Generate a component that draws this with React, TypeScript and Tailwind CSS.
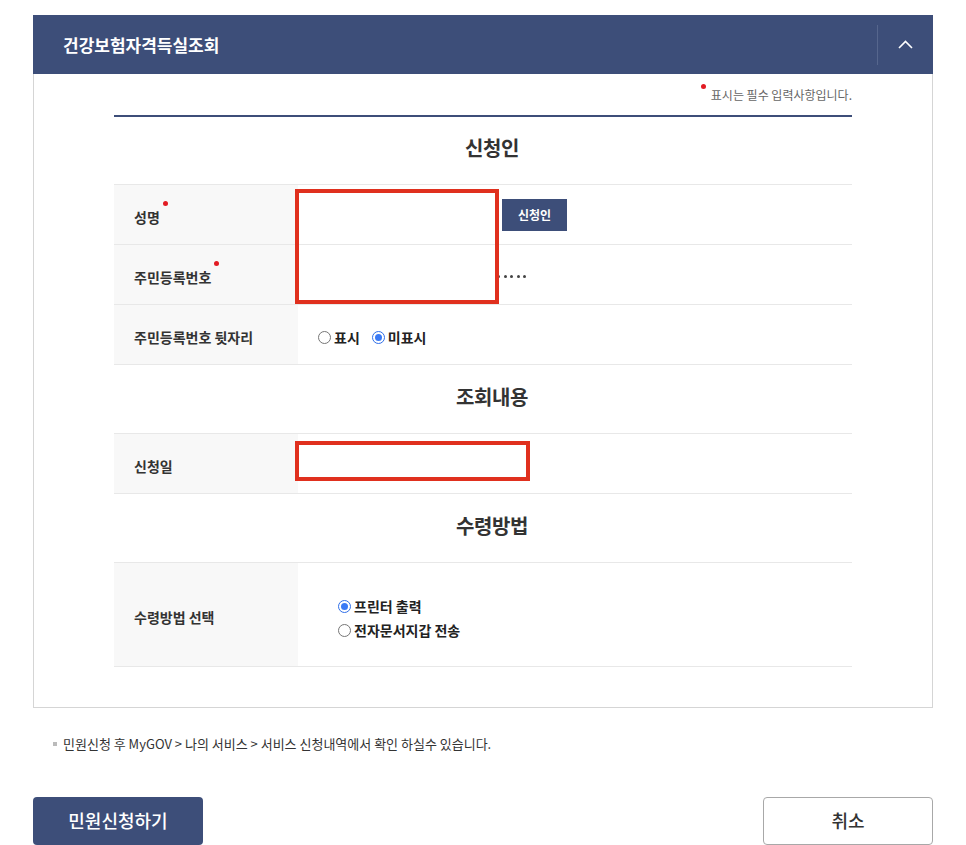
import React from "react";

const font = { fontFamily: '"Noto Sans CJK KR", "Noto Sans", sans-serif' };

function Radio({ checked, label }: { checked?: boolean; label: string }) {
  return (
    <label className="flex items-center gap-[3px] text-[14px] font-bold text-[#222]">
      {checked ? (
        <span className="w-[13px] h-[13px] rounded-full border border-[#2f6fe9] flex items-center justify-center bg-white">
          <span className="w-[7px] h-[7px] rounded-full bg-[#3a7af5]" />
        </span>
      ) : (
        <span className="w-[13px] h-[13px] rounded-full border border-[#767676] bg-white" />
      )}
      {label}
    </label>
  );
}

function Row({ label, required, children, tall }: { label: string; required?: boolean; children?: React.ReactNode; tall?: boolean }) {
  return (
    <div className={`flex border-b border-[#e8e8e8] ${tall ? "h-[104px]" : "h-[60px]"}`}>
      <div className="w-[184px] shrink-0 bg-[#f8f8f8] flex items-center pl-5 pt-[5px]">
        <span className="relative text-[14px] font-bold text-[#333]">
          {label}
          {required && <span className="absolute -right-[8px] top-[-6px] w-[5px] h-[5px] rounded-full bg-[#e21b23]" />}
        </span>
      </div>
      <div className="flex-1 relative flex items-center">{children}</div>
    </div>
  );
}

function SectionTitle({ title }: { title: string }) {
  return (
    <div className="h-[69px] flex items-center justify-center pl-[18px] pb-[5px] border-b border-[#e8e8e8]">
      <h3 className="text-[20px] font-bold text-[#333] tracking-[-0.02em]">{title}</h3>
    </div>
  );
}

export default function App() {
  return (
    <div className="bg-white w-[966px] min-h-[845px] pt-[15px] pl-[33px]" style={font}>
      <div className="w-[900px]">
        {/* Header */}
        <div className="h-[59px] bg-[#3d4e79] flex items-center justify-between">
          <h2 className="pl-[30px] text-[17px] font-bold text-white">건강보험자격득실조회</h2>
          <div className="flex items-center h-full">
            <div className="w-px h-[40px] bg-[#56668d]" />
            <button className="w-[55px] h-full flex items-center justify-center">
              <svg width="15" height="9" viewBox="0 0 15 9" fill="none">
                <polyline points="1,8 7.5,1.5 14,8" stroke="white" strokeWidth="1.6" />
              </svg>
            </button>
          </div>
        </div>

        {/* Body */}
        <div className="border-x border-b border-[#d5d5d5] px-[80px] pt-[12px] pb-[40px]">
          <div className="flex justify-end items-start h-[17px] mb-[12px]">
            <span className="w-[5px] h-[5px] rounded-full bg-[#e21b23] mt-[-2px] mr-[5px]" />
            <span className="text-[12px] text-[#666] leading-[17px]">표시는 필수 입력사항입니다.</span>
          </div>
          <div className="border-t-2 border-[#3d4e79]" />

          <div className="h-[68px] flex items-center justify-center pl-[18px] pb-[5px] border-b border-[#e8e8e8]">
            <h3 className="text-[20px] font-bold text-[#333] tracking-[-0.02em]">신청인</h3>
          </div>
          <Row label="성명" required>
            <div className="w-[200px] h-[32px] ml-[1px]" />
            <button className="ml-[3px] w-[65px] h-[32px] bg-[#3d4e79] text-white text-[12px] font-bold">신청인</button>
            {/* red annotation box over the applicant inputs */}
            <div className="absolute z-10 left-[-3px] top-[4px] w-[204px] h-[115px] border-[4px] border-[#e0301e] pointer-events-none" />
          </Row>
          <Row label="주민등록번호" required>
            <div className="ml-[199px] mt-[4px] flex gap-[3.5px]">
              <span className="w-[3px] h-[3px] rounded-full bg-[#444]" />
              <span className="w-[3px] h-[3px] rounded-full bg-[#444]" />
              <span className="w-[3px] h-[3px] rounded-full bg-[#444]" />
              <span className="w-[3px] h-[3px] rounded-full bg-[#444]" />
              <span className="w-[3px] h-[3px] rounded-full bg-[#444]" />
            </div>
          </Row>
          <Row label="주민등록번호 뒷자리">
            <div className="flex items-center gap-[12px] pl-5 pt-[5px]">
              <Radio label="표시" />
              <Radio label="미표시" checked />
            </div>
          </Row>

          <SectionTitle title="조회내용" />
          <Row label="신청일">
            <div className="absolute left-[-3px] top-[7px] w-[235px] h-[40px] border-[4px] border-[#e0301e]" />
          </Row>

          <SectionTitle title="수령방법" />
          <Row label="수령방법 선택" tall>
            <div className="flex flex-col gap-[3px] pl-10 pt-[7px]">
              <Radio label="프린터 출력" checked />
              <Radio label="전자문서지갑 전송" />
            </div>
          </Row>
        </div>

        <p className="mt-[26px] pl-[20px] flex items-center text-[13px] text-[#333]">
          <span className="w-[4px] h-[4px] bg-[#bbb] mr-[6px]" />
          민원신청 후 MyGOV &gt; 나의 서비스 &gt; 서비스 신청내역에서 확인 하실수 있습니다.
        </p>

        <div className="flex justify-between mt-[43px]">
          <button className="w-[170px] h-[48px] rounded-[4px] bg-[#3d4e79] text-white text-[18px] font-medium">민원신청하기</button>
          <button className="w-[170px] h-[48px] rounded-[4px] border border-[#a8a8a8] bg-white text-[#333] text-[18px] font-medium">취소</button>
        </div>
      </div>
    </div>
  );
}
